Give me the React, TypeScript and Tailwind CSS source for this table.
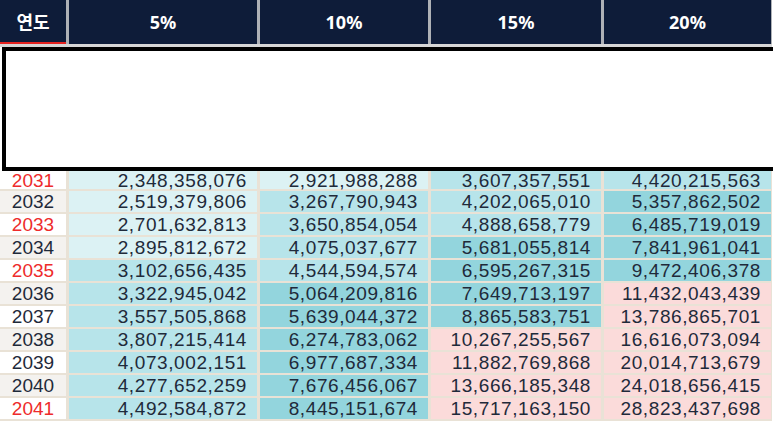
import React from 'react';

type Row = { year: number; red: boolean; values: number[] };

const rows: Row[] = [
  { year: 2031, red: true, values: [2348358076, 2921988288, 3607357551, 4420215563] },
  { year: 2032, red: false, values: [2519379806, 3267790943, 4202065010, 5357862502] },
  { year: 2033, red: true, values: [2701632813, 3650854054, 4888658779, 6485719019] },
  { year: 2034, red: false, values: [2895812672, 4075037677, 5681055814, 7841961041] },
  { year: 2035, red: true, values: [3102656435, 4544594574, 6595267315, 9472406378] },
  { year: 2036, red: false, values: [3322945042, 5064209816, 7649713197, 11432043439] },
  { year: 2037, red: false, values: [3557505868, 5639044372, 8865583751, 13786865701] },
  { year: 2038, red: false, values: [3807215414, 6274783062, 10267255567, 16616073094] },
  { year: 2039, red: false, values: [4073002151, 6977687334, 11882769868, 20014713679] },
  { year: 2040, red: false, values: [4277652259, 7676456067, 13666185348, 24018656415] },
  { year: 2041, red: true, values: [4492584872, 8445151674, 15717163150, 28823437698] },
];

const headers = ['5%', '10%', '15%', '20%'];

// colour bins of the conditional format
function cellBg(v: number) {
  if (v >= 10_000_000_000) return 'bg-[#fbdbda]';
  if (v >= 5_000_000_000) return 'bg-[#93d5dd]';
  if (v >= 3_000_000_000) return 'bg-[#b7e4ea]';
  return 'bg-[#dcf2f4]';
}

const cols = 'grid grid-cols-[66px_188px_168px_170px_167px] gap-x-[3px]';
const numFont = { fontFamily: '"Liberation Sans", Arial, sans-serif' };

export default function App() {
  return (
    <div className="w-[773px] h-[426px] bg-white overflow-hidden">
      {/* Header */}
      <div className="w-[772px] bg-[#aeb1b6] pr-[2px]">
        <div
          className={`${cols} h-[44px]`}
          style={{ fontFamily: '"Noto Sans", "Noto Sans CJK KR", sans-serif' }}
        >
          <div className="relative bg-[#0e1c39] flex items-center justify-center text-white font-bold text-[18px]">
            연도
            <div className="absolute left-0 right-0 bottom-0 h-[2px] bg-[#e5221f]" />
          </div>
          {headers.map(h => (
            <div key={h} className="bg-[#0e1c39] flex items-center justify-center text-white font-bold text-[18px]">
              {h}
            </div>
          ))}
        </div>
      </div>
      <div className="h-[3px] w-[772px] bg-[#d6d6d6]" />

      {/* Blank box */}
      <div className="ml-[2px] w-[780px] h-[124px] bg-white border-4 border-black" />

      {/* Data rows */}
      <div className="w-[772px] bg-[#e9e2d6] pr-[2px] pb-[2px]">
        <div className={`${cols} gap-y-[2px]`} style={numFont}>
          {rows.map((r, idx) => (
            <React.Fragment key={r.year}>
              <div
                className={`${idx === 0 ? 'h-[18px]' : 'h-[21px]'} flex items-center justify-center text-[19px] leading-none ${
                  r.year % 2 === 0 ? 'bg-[#f4f2ef]' : 'bg-white'
                } ${r.red ? 'text-[#ee2b2b]' : 'text-[#1f2a3a]'}`}
              >
                {r.year}
              </div>
              {r.values.map((v, i) => (
                <div
                  key={i}
                  className={`${idx === 0 ? 'h-[18px]' : 'h-[21px]'} flex items-center justify-end pr-[10px] text-[19px] leading-none tracking-[0.6px] text-[#1f2a3a] ${cellBg(v)}`}
                >
                  {v.toLocaleString('en-US')}
                </div>
              ))}
            </React.Fragment>
          ))}
        </div>
      </div>
    </div>
  );
}
